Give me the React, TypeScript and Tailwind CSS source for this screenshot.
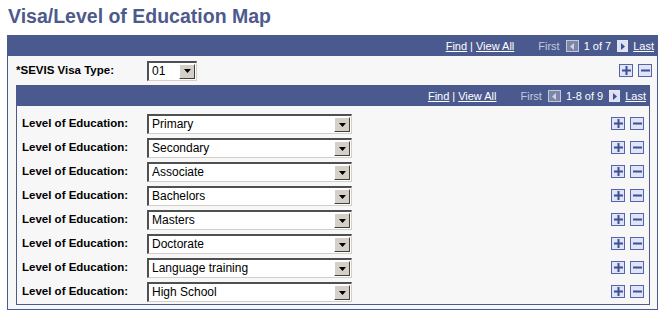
import React from 'react';

const levels = [
    'Primary',
    'Secondary',
    'Associate',
    'Bachelors',
    'Masters',
    'Doctorate',
    'Language training',
    'High School',
];

const Select: React.FC<{ value: string; width: string }> = ({ value, width }) => (
    <div
        className={`${width} h-[20px] flex items-stretch bg-white border-t-2 border-l-2 border-b border-r border-t-[#505050] border-l-[#505050] border-b-[#d4d0c8] border-r-[#d4d0c8]`}
    >
        <span className="flex-1 pl-[3px] text-[12px] leading-[17px] text-black truncate">{value}</span>
        <span className="w-[16px] my-[1px] mr-[1px] bg-[#d4d0c8] border-t border-l border-b border-r border-t-white border-l-white border-b-[#404040] border-r-[#404040] flex items-center justify-center">
            <svg width="7" height="4" viewBox="0 0 7 4">
                <path d="M0 0H7L3.5 4Z" fill="#000" />
            </svg>
        </span>
    </div>
);

const PlusMinus: React.FC = () => (
    <div className="flex gap-[5px] -mt-[1px]">
        <span className="w-[14px] h-[13px] border border-[#5565a8] bg-[#dfe4f7] flex items-center justify-center">
            <svg width="9" height="9" viewBox="0 0 9 9">
                <path d="M3.5 0H5.5V3.5H9V5.5H5.5V9H3.5V5.5H0V3.5H3.5Z" fill="#3d4f98" />
            </svg>
        </span>
        <span className="w-[14px] h-[13px] border border-[#5565a8] bg-[#dfe4f7] flex items-center justify-center">
            <svg width="9" height="9" viewBox="0 0 9 9">
                <path d="M0 3.5H9V5.5H0Z" fill="#3d4f98" />
            </svg>
        </span>
    </div>
);

const NavBar: React.FC<{ count: string }> = ({ count }) => (
    <div className="h-[20px] bg-[#4b5a8e] flex items-center justify-end pr-[3px] text-[11px] text-white">
        <span className="underline">Find</span>
        <span className="mx-[3px]">|</span>
        <span className="underline">View All</span>
        <span className="ml-[24px] text-[#c3c8dc]">First</span>
        <span className="ml-[6px] w-[13px] h-[12px] border border-[#c4c8d8] bg-[#7d86a8] flex items-center justify-center">
            <svg width="4" height="7" viewBox="0 0 4 7">
                <path d="M4 0V7L0 3.5Z" fill="#d0d3e0" />
            </svg>
        </span>
        <span className="ml-[5px]">{count}</span>
        <span className="ml-[6px] w-[11px] h-[12px] border border-[#e4e7f2] bg-[#dde1f1] flex items-center justify-center">
            <svg width="4" height="7" viewBox="0 0 4 7">
                <path d="M0 0V7L4 3.5Z" fill="#3d4f98" />
            </svg>
        </span>
        <span className="ml-[5px] underline">Last</span>
    </div>
);

export default function App() {
    return (
        <div className="w-[660px] h-[312px] bg-white overflow-hidden font-['Liberation_Sans',Arial,sans-serif]">
            <h1 className="pl-[8px] pt-[5px] h-[35px] text-[19.5px] leading-[22px] font-bold text-[#4d5a8c]">
                Visa/Level of Education Map
            </h1>
            <div className="ml-[7px] w-[651px] border border-[#4b5a8e] bg-[#f7f7f7] pb-[4px]">
                <NavBar count="1 of 7" />
                <div className="h-[29px] flex items-center pl-[8px] pr-[5px]">
                    <span className="w-[131px] text-[11.5px] font-bold text-black">*SEVIS Visa Type:</span>
                    <Select value="01" width="w-[50px]" />
                    <div className="ml-auto">
                        <PlusMinus />
                    </div>
                </div>
                <div className="ml-[8px] w-[634px] border border-[#4b5a8e]">
                    <NavBar count="1-8 of 9" />
                    <div className="pt-[6px]">
                        {levels.map((lv) => (
                            <div key={lv} className="h-[24px] flex items-center pl-[5px] pr-[5px]">
                                <span className="w-[125px] text-[11.5px] font-bold text-black">Level of Education:</span>
                                <Select value={lv} width="w-[205px]" />
                                <div className="ml-auto">
                                    <PlusMinus />
                                </div>
                            </div>
                        ))}
                    </div>
                </div>
            </div>
        </div>
    );
}
